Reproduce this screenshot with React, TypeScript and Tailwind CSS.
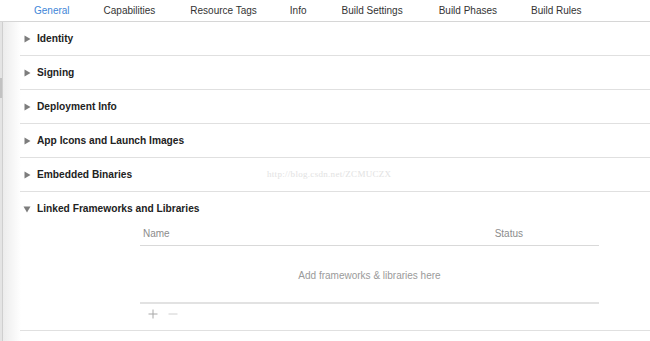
import React from 'react';

// ─── Xcode target editor: General tab ─────────────────────────────────────────

const tabs = [
  { label: 'General', cls: 'ml-[34px] text-[#3e86d8]' },
  { label: 'Capabilities', cls: 'ml-[34px]' },
  { label: 'Resource Tags', cls: 'ml-[35px]' },
  { label: 'Info', cls: 'ml-[33px]' },
  { label: 'Build Settings', cls: 'ml-[35px]' },
  { label: 'Build Phases', cls: 'ml-[36px]' },
  { label: 'Build Rules', cls: 'ml-[34px]' },
];

const sections = [
  'Identity',
  'Signing',
  'Deployment Info',
  'App Icons and Launch Images',
  'Embedded Binaries',
];

const Triangle: React.FC<{ open?: boolean }> = ({ open }) => (
  <svg width="8" height="8" viewBox="0 0 8 8" className="shrink-0">
    {open ? <path d="M0.5 1.5 H7.5 L4 7.5 Z" fill="#7d7d7d" /> : <path d="M1.5 0.5 V7.5 L7.5 4 Z" fill="#7d7d7d" />}
  </svg>
);

const App: React.FC = () => {
  return (
    <div
      className="relative w-[650px] h-[341px] overflow-hidden bg-white text-[#262626]"
      style={{ fontFamily: '"Liberation Sans", Arial, sans-serif' }}
    >
      {/* Tab bar */}
      <div className="h-[22px] pb-[1px] border-b border-[#d6d6d6] flex items-center text-[10px] text-[#333]">
        {tabs.map((t) => (
          <span key={t.label} className={t.cls}>
            {t.label}
          </span>
        ))}
      </div>

      <div className="flex h-[319px]">
        {/* Left window edge */}
        <div className="w-[3px] flex flex-col bg-[#e4e4e4] border-r border-[#cfcfcf]">
          <div className="h-[56px]" />
          <div className="h-[20px] bg-[#c2c2c2]" />
        </div>

        <div className="flex-1 pl-[17px] bg-[linear-gradient(to_right,#ececec,#ffffff_18px)]">
          {sections.map((s) => (
            <div key={s} className="h-[34px] border-b border-[#e0e0e0] flex items-center pl-[3px] gap-[6px]">
              <Triangle />
              <span className="text-[10.2px] font-bold text-[#222]">{s}</span>
            </div>
          ))}

          {/* Linked Frameworks and Libraries */}
          <div className="border-b border-[#e0e0e0] pb-[7px]">
            <div className="h-[33px] flex items-center pl-[3px] gap-[6px]">
              <Triangle open />
              <span className="text-[10.2px] font-bold text-[#222]">Linked Frameworks and Libraries</span>
            </div>
            <div className="ml-[120px] w-[459px] text-[10px] text-[#8c8c8c]">
              <div className="h-[21px] flex items-center justify-between pl-[3px] pr-[76px] pb-[3px] border-b border-[#d9d9d9]">
                <span>Name</span>
                <span>Status</span>
              </div>
              <div className="h-[58px] pt-[2px] flex items-center justify-center border-b-2 border-[#e2e2e2] text-[#9a9a9a]">
                Add frameworks &amp; libraries here
              </div>
              <div className="h-[19px] pt-[1px] flex items-center gap-[10px] pl-[8px]">
                <svg width="10" height="10" viewBox="0 0 10 10">
                  <path d="M5 0.5 V9.5 M0.5 5 H9.5" stroke="#a8a8a8" strokeWidth="1" />
                </svg>
                <svg width="10" height="10" viewBox="0 0 10 10">
                  <path d="M0.5 5 H9.5" stroke="#d0d0d0" strokeWidth="1" />
                </svg>
              </div>
            </div>
          </div>
        </div>
      </div>

      {/* Watermark */}
      <span
        className="absolute left-[267px] top-[168px] text-[9px] text-[#e2e2e2] tracking-[0.3px]"
        style={{ fontFamily: '"Liberation Serif", serif' }}
      >
        http://blog.csdn.net/ZCMUCZX
      </span>
    </div>
  );
};

export default App;
